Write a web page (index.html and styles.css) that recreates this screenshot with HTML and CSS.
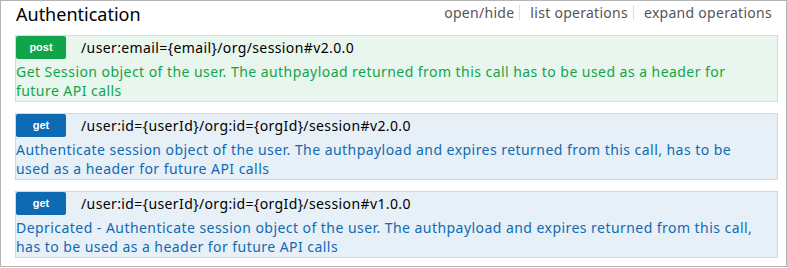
FILE: index.html
```html
<html>
<head>
	<link rel="stylesheet" href="styles.css">
</head>
<body>
	<div class="resource">
		<div class="heading">
			<h2 class="title">Authentication</h2>
			<ul class="options">
				<li><a href="#">open/hide</a></li>
				<li><a href="#">list operations</a></li>
				<li><a href="#">expand operations</a></li>
			</ul>
		</div>
		<div class="endpoint post">
			<div class="line">
				<span class="method">post</span>
				<span class="path">/user:email={email}/org/session#v2.0.0</span>
			</div>
			<p class="desc">Get Session object of the user. The authpayload returned from this call has to be used as a header for future API calls</p>
		</div>
		<div class="endpoint get">
			<div class="line">
				<span class="method">get</span>
				<span class="path">/user:id={userId}/org:id={orgId}/session#v2.0.0</span>
			</div>
			<p class="desc">Authenticate session object of the user. The authpayload and expires returned from this call, has to be used as a header for future API calls</p>
		</div>
		<div class="endpoint get">
			<div class="line">
				<span class="method">get</span>
				<span class="path">/user:id={userId}/org:id={orgId}/session#v1.0.0</span>
			</div>
			<p class="desc">Depricated - Authenticate session object of the user. The authpayload and expires returned from this call, has to be used as a header for future API calls</p>
		</div>
	</div>
</body>
</html>
```

FILE: styles.css
```css
body {
	margin: 0;
	font-family: "Noto Sans", Roboto, sans-serif;
	background: #fff;
}

.resource {
	width: 787px;
	height: 267px;
	box-sizing: border-box;
	border: 1px solid #b4b4b4;
	padding: 0 8px 0 14px;
}

.heading {
	display: flex;
	justify-content: space-between;
	align-items: flex-start;
	height: 34px;
}

.title {
	margin: 0;
	padding: 3px 0 0 1px;
	font-size: 18px;
	line-height: 21px;
	font-weight: normal;
	color: #000;
}

.options {
	display: flex;
	list-style: none;
	margin: 0;
	padding: 4px 1px 0 0;
}

.options li {
	padding: 0 5px 0 10px;
	border-right: 1px solid #ddd;
	font-size: 14px;
	line-height: 15px;
	letter-spacing: 0.28px;
}

.options li:last-child {
	border-right: none;
}

.options a {
	color: #555;
	text-decoration: none;
}

.endpoint {
	height: 67px;
	box-sizing: border-box;
	margin-bottom: 11px;
	border: 1px solid;
}

.line {
	display: flex;
	align-items: center;
	height: 23px;
}

.method {
	width: 50px;
	height: 23px;
	line-height: 23px;
	border-radius: 2px;
	text-align: center;
	color: #fff;
	font-family: "Liberation Sans", Arial, sans-serif;
	font-weight: bold;
	font-size: 11px;
}

.path {
	margin-left: 15px;
	font-size: 14px;
	letter-spacing: 0.39px;
	color: #000;
}

.desc {
	margin: 0;
	padding: 3px 15px 0 0;
	font-size: 14px;
	line-height: 19px;
	letter-spacing: 0.45px;
}

.post {
	background: #e9f6ed;
	border-color: #c3e8d1;
}

.post .method {
	background: #10a54a;
}

.post .desc {
	color: #10a54a;
}

.get {
	background: #e7f0f7;
	border-color: #c3d9ec;
}

.get .method {
	background: #0f6ab4;
}

.get .desc {
	color: #0f6ab4;
}
```
